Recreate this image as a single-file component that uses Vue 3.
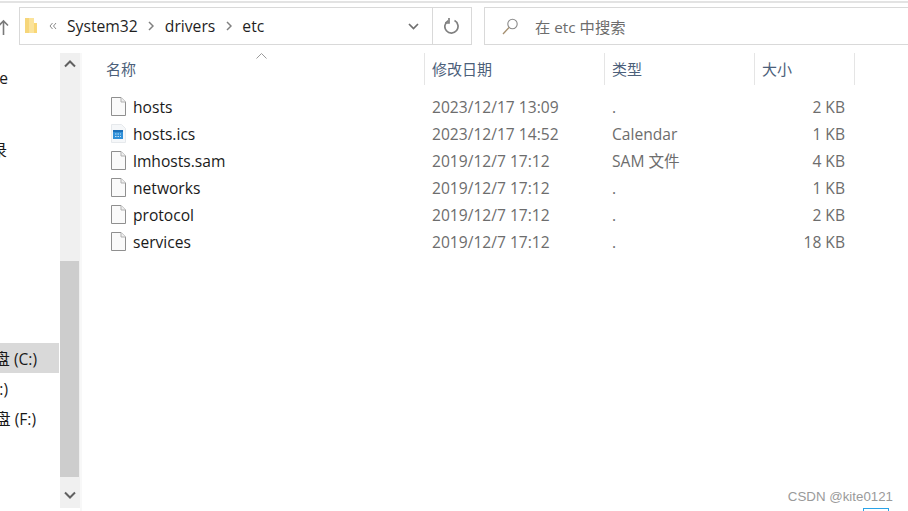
<script setup>
const cols = [
  { label: '名称', cls: 'c-name', sort: true },
  { label: '修改日期', cls: 'c-date' },
  { label: '类型', cls: 'c-type' },
  { label: '大小', cls: 'c-size' }
]
const files = [
  { name: 'hosts', date: '2023/12/17 13:09', type: '.', size: '2 KB' },
  { name: 'hosts.ics', date: '2023/12/17 14:52', type: 'Calendar', size: '1 KB', cal: true },
  { name: 'lmhosts.sam', date: '2019/12/7 17:12', type: 'SAM 文件', size: '4 KB' },
  { name: 'networks', date: '2019/12/7 17:12', type: '.', size: '1 KB' },
  { name: 'protocol', date: '2019/12/7 17:12', type: '.', size: '2 KB' },
  { name: 'services', date: '2019/12/7 17:12', type: '.', size: '18 KB' }
]
</script>

<template>
  <div class="window">
    <div class="topline"></div>
    <div class="toolbar">
      <svg class="up" width="11" height="17" viewBox="0 0 11 17"><path d="M5.5 16V2M1 6.5l4.5-4.5 4.5 4.5" fill="none" stroke="#7a7a7a" stroke-width="1.6"/></svg>
      <div class="address">
        <div class="crumbs">
          <svg class="folder" width="13" height="17" viewBox="0 0 13 17">
            <path d="M0 1h4v15H0z" fill="#f6d67a"/>
            <path d="M4 1h5v15H4z" fill="#fbe39b"/>
            <path d="M9 6h3v10H9z" fill="#f9d777"/>
          </svg>
          <svg class="dbl" width="8" height="8" viewBox="0 0 8 8"><path d="M3.5 1L1 4l2.500 3M7 1L4.500 4 7 7" fill="none" stroke="#8a8a8a"/></svg>
          <span class="crumb first">System32</span>
          <svg class="sep" width="6" height="10" viewBox="0 0 6 10"><path d="M1 1l4 4-4 4" fill="none" stroke="#808080" stroke-width="1.500"/></svg>
          <span class="crumb">drivers</span>
          <svg class="sep" width="6" height="10" viewBox="0 0 6 10"><path d="M1 1l4 4-4 4" fill="none" stroke="#808080" stroke-width="1.500"/></svg>
          <span class="crumb">etc</span>
        </div>
        <div class="drop">
          <svg width="11" height="7" viewBox="0 0 11 7"><path d="M1 1l4.500 4.500L10 1" fill="none" stroke="#6f6f6f" stroke-width="1.700"/></svg>
        </div>
        <div class="refresh">
          <svg width="16" height="16" viewBox="0 0 16 16"><path d="M10.500 2.600A6.600 6.600 0 1 1 4.200 2.700" fill="none" stroke="#808080" stroke-width="1.700"/><path d="M4 0v5h-4" fill="none" stroke="#808080" stroke-width="1.700" transform="translate(1 0)"/></svg>
        </div>
      </div>
      <div class="search">
        <svg width="17" height="17" viewBox="0 0 17 17"><circle cx="10.500" cy="6" r="4.700" fill="none" stroke="#8a8a8a" stroke-width="1.100"/><path d="M7 9.500L1 16" fill="none" stroke="#a58f6f" stroke-width="1.300"/></svg>
        <span>在 etc 中搜索</span>
      </div>
    </div>

    <div class="body">
      <aside class="nav">
        <div class="nav-item i-e"><span>e</span></div>
        <div class="nav-item i-b"><span>录</span></div>
        <div class="nav-item i-c"><span>本地磁盘 (C:)</span></div>
        <div class="nav-item i-d"><span>(D:)</span></div>
        <div class="nav-item i-f"><span>本地磁盘 (F:)</span></div>
      </aside>
      <div class="scrollbar">
        <div class="sb-btn">
          <svg width="14" height="9" viewBox="0 0 14 9"><path d="M2 7.500l5-5 5 5" fill="none" stroke="#606060" stroke-width="2"/></svg>
        </div>
        <div class="sb-track"><div class="sb-thumb"></div></div>
        <div class="sb-btn down">
          <svg width="14" height="9" viewBox="0 0 14 9"><path d="M2 1.500l5 5 5-5" fill="none" stroke="#606060" stroke-width="2"/></svg>
        </div>
      </div>
      <main class="list">
        <div class="head">
          <div v-for="c in cols" :key="c.label" class="hcell" :class="c.cls">
            {{ c.label }}
            <svg v-if="c.sort" class="caret" width="11" height="6" viewBox="0 0 11 6"><path d="M.5 5.500l5-5 5 5" fill="none" stroke="#9a9a9a"/></svg>
          </div>
        </div>
        <div class="rows">
          <div v-for="f in files" :key="f.name" class="row">
            <div class="c-name namecell">
              <svg v-if="!f.cal" class="ficon" width="15" height="19" viewBox="0 0 15 19">
                <path d="M.5.500h9.500l4.500 4.500v13.500H.5z" fill="#fafafa" stroke="#8f8f8f"/>
                <path d="M10 .5v4.500h4.500" fill="#f0f0f0" stroke="#b0b0b0"/>
              </svg>
              <svg v-else class="ficon" width="15" height="19" viewBox="0 0 15 19">
                <path d="M.5.500h10l4 4v14H.5z" fill="#f5f7f9" stroke="#e6e9ec"/>
                <rect x="2" y="6" width="10" height="9" fill="#2f8fd8"/>
                <rect x="2" y="6" width="10" height="2" fill="#1c6fb8"/>
                <path d="M4 10h6M4 12.500h6" stroke="#bfe0f7" stroke-dasharray="1.500 1"/>
              </svg>
              <span class="fname">{{ f.name }}</span>
            </div>
            <div class="c-date cell">{{ f.date }}</div>
            <div class="c-type cell">{{ f.type }}</div>
            <div class="c-size cell size">{{ f.size }}</div>
          </div>
        </div>
      </main>
    </div>
    <div class="mark">CSDN @kite0121</div>
    <div class="corner"></div>
  </div>
</template>

<style>
html, body { margin: 0; background: #fff; overflow: hidden; }
</style>

<style scoped>
.window {
  position: relative;
  width: 908px;
  height: 511px;
  overflow: hidden;
  background: #fff;
  font-family: "Open Sans", "Noto Sans CJK SC", sans-serif;
  font-size: 15.6px;
  color: #1a1a1a;
}
.topline { height: 2px; background: #e3e3e3; margin-top: 1px; }
.toolbar {
  display: flex;
  align-items: flex-start;
  height: 38px;
  margin-top: 4px;
}
.up { width: 11px; margin: 12px 0 0 -2px; flex: none; }
.address {
  display: flex;
  margin-left: 10px;
  width: 453px;
  height: 38px;
  box-sizing: border-box;
  border: 1px solid #d9d9d9;
  flex: none;
}
.crumbs { flex: 1; display: flex; align-items: center; padding-left: 5px; }
.folder { flex: none; margin-top: -1px; }
.dbl { margin-left: 11px; }
.crumb { font-size: 15.7px; color: #1f1f1f; }
.first { margin-left: 10px; }
.sep { margin: 0 10.500px; }
.drop { width: 37px; box-sizing: border-box; display: flex; align-items: center; padding-left: 13px; }
.drop svg { margin-top: 1px; }
.refresh {
  width: 38px;
  border-left: 1px solid #d9d9d9;
  display: flex;
  align-items: center;
  justify-content: center;
}
.search {
  margin-left: 12px;
  flex: 1;
  height: 38px;
  box-sizing: border-box;
  border: 1px solid #d9d9d9;
  border-right: none;
  display: flex;
  align-items: center;
  padding-left: 17px;
  color: #6d6d6d;
  font-size: 15.3px;
}
.search span { margin-left: 16px; }
.body { display: flex; height: 458px; margin-top: 8px; }
.nav { width: 59px; flex: none; position: relative; }
.nav-item {
  display: flex;
  justify-content: flex-end;
  align-items: center;
  overflow: hidden;
  white-space: nowrap;
  height: 30px;
  position: absolute;
  left: 0;
  width: 100%;
  padding-right: 22px;
  padding-bottom: 2px;
  box-sizing: border-box;
}
.nav-item span { flex: none; }
.i-e { top: 11px; padding-right: 51px; }
.i-b { top: 82px; padding-right: 52px; }
.i-c { top: 290px; background: #d9d9d9; padding-bottom: 0; }
.i-d { top: 322px; padding-right: 51px; }
.i-f { top: 351px; padding-right: 23px; }
.scrollbar {
  width: 20px;
  flex: none;
  margin-left: 1px;
  display: flex;
  flex-direction: column;
  background: #f0f0f0;
  height: 455px;
}
.sb-btn { height: 21px; display: flex; align-items: center; justify-content: center; flex: none; }
.sb-btn.down { height: 31px; background: #f0f0f0; }
.sb-btn.down svg { margin-top: 6px; }
.sb-track { flex: 1; padding-top: 187px; display: flex; flex-direction: column; }
.sb-thumb { flex: 1; background: #cdcdcd; width: 19px; }
.list { flex: 1; border-left: 2px solid #f8f8f8; min-width: 0; }
.head { display: flex; height: 32px; }
.hcell {
  position: relative;
  display: flex;
  align-items: center;
  color: #4c607a;
  font-size: 15px;
  box-sizing: border-box;
  border-right: 1px solid #e5e5e5;
  padding-left: 7px;
  padding-bottom: 2px;
}
.c-name { width: 343px; flex: none; }
.c-date { width: 180px; flex: none; }
.c-type { width: 150px; flex: none; }
.c-size { width: 100px; flex: none; }
.hcell.c-name { padding-left: 24px; }
.caret { position: absolute; left: 174px; top: 0; }
.rows { padding-top: 8px; }
.row { display: flex; height: 27px; align-items: center; }
.namecell { display: flex; align-items: center; padding-left: 29px; box-sizing: border-box; }
.ficon { flex: none; }
.fname { margin-left: 7px; color: #1a1a1a; font-size: 15.6px; }
.cell { color: #6d6d6d; padding-left: 7px; box-sizing: border-box; font-size: 15.6px; }
.size { text-align: right; padding-right: 10px; padding-left: 0; }
.mark {
  position: absolute;
  right: 15px;
  top: 489px;
  font-family: "Liberation Sans", Arial, sans-serif;
  font-size: 13.3px;
  color: #9a9a9a;
}
.corner {
  position: absolute;
  left: 863px;
  top: 508px;
  width: 26px;
  height: 6px;
  box-sizing: border-box;
  border: 1px solid #2aa3e8;
}
</style>
